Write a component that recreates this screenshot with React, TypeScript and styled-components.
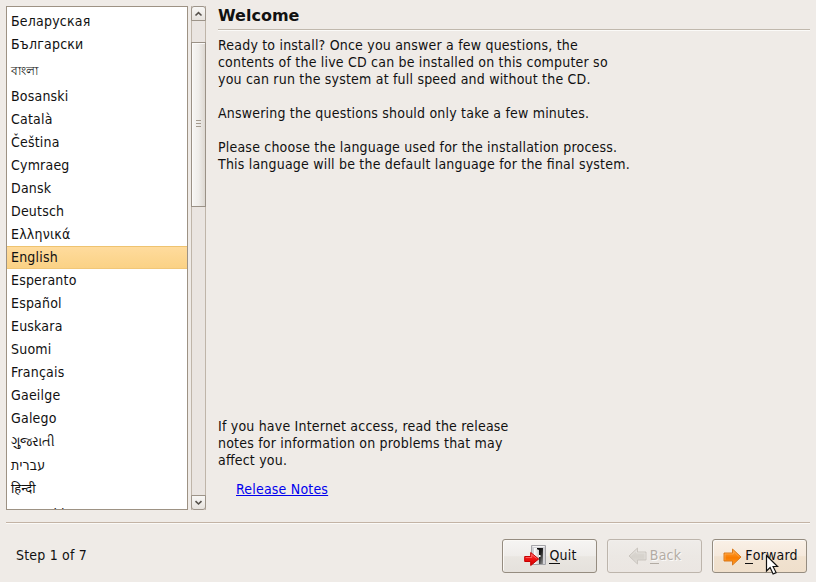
import React from "react";
import styled, { createGlobalStyle, css } from "styled-components";

const Global = createGlobalStyle`
  * { box-sizing: border-box; }
  html, body { margin: 0; padding: 0; overflow: hidden; }
  body {
    background: #efebe7;
    color: #111;
    font-family: "DejaVu Sans Condensed", "DejaVu Sans", "Noto Sans", sans-serif;
    font-size: 14px;
    letter-spacing: 0.2px;
    font-feature-settings: "liga" 1;
  }
`;

const Window = styled.main`
  width: 816px;
  height: 582px;
  display: flex;
  flex-direction: column;
  padding: 6px 6px 0;
  background: #efebe7;
  cursor: default;
`;

const Content = styled.div`
  display: flex;
  height: 504px;
`;

const LanguageList = styled.ul`
  width: 182px;
  height: 504px;
  margin: 0 3px 0 0;
  padding: 3px 0 0;
  list-style: none;
  overflow: hidden;
  background: #fff;
  border: 1px solid #9d9284;
`;

const Language = styled.li<{ $height?: number; $line?: number; $size?: number; $selected?: boolean }>`
  height: ${(p) => p.$height ?? 23}px;
  line-height: ${(p) => p.$line ?? p.$height ?? 23}px;
  padding: 0 4px;
  font-size: ${(p) => p.$size ?? 14}px;
  letter-spacing: ${(p) => (p.$size ? "0" : "0.2px")};
  white-space: nowrap;
  ${(p) =>
    p.$selected &&
    css`
      background: linear-gradient(#ffdc9e, #fad184);
      box-shadow: inset 0 1px #eec370, inset 0 -1px #f1c778;
    `}
`;

const Scrollbar = styled.div`
  width: 15px;
  height: 504px;
  display: flex;
  flex-direction: column;
  background: #eae5e1;
  border-left: 1px solid #bfb5a9;
  border-right: 1px solid #bfb5a9;
`;

const Stepper = styled.div<{ $down?: boolean }>`
  height: 15px;
  margin: 0 -1px;
  display: flex;
  align-items: center;
  justify-content: center;
  background: linear-gradient(#f8f7f5, #e6e2dd);
  border: 1px solid #9d9489;
  border-radius: ${(p) => (p.$down ? "0 0 3px 3px" : "3px 3px 0 0")};
`;

const Thumb = styled.div`
  height: 165px;
  margin: 21px -1px auto;
  padding-bottom: 2px;
  display: flex;
  align-items: center;
  justify-content: center;
  background: linear-gradient(90deg, #f7f6f4, #efedea 50%, #ddd8d2);
  border: 1px solid #9a9186;
  box-shadow: inset 1px 1px #fbfaf9;
`;

const Grip = styled.div`
  width: 5px;
  height: 7px;
  border-top: 1px solid #a49a8e;
  border-bottom: 1px solid #a49a8e;
  display: flex;
  align-items: center;
  &::before { content: ""; width: 5px; height: 1px; background: #a49a8e; }
`;

const Page = styled.section`
  flex: 1;
  display: flex;
  flex-direction: column;
  margin-left: 12px;
`;

const Title = styled.h1`
  margin: 0;
  height: 23px;
  font: bold 16px/19px "DejaVu Sans", sans-serif;
  letter-spacing: 0;
  color: #111;
`;

const Rule = styled.div<{ $footer?: boolean }>`
  height: 2px;
  flex: none;
  margin-top: ${(p) => (p.$footer ? 12 : 0)}px;
  background: ${(p) => (p.$footer ? "#c3b3a5" : "#c0b8ad")};
  border-bottom: 1px solid #fbfaf8;
`;

const Copy = styled.p`
  margin: 6px 0 0;
  line-height: 17px;
  white-space: pre;
`;

const Notes = styled.div`
  margin-top: auto;
  height: 92px;
  line-height: 17px;
  white-space: pre;
`;

const NotesLink = styled.a`
  display: block;
  margin: 12px 0 0 18px;
  color: #0000ee;
  text-decoration: underline;
`;

const Footer = styled.footer`
  display: flex;
  align-items: center;
  margin-top: 15px;
  height: 34px;
  padding: 0 3px 0 10px;
  gap: 10px;
`;

const Step = styled.span`
  flex: 1;
  line-height: 17px;
  margin-bottom: 2px;
`;

const Button = styled.button<{ $tone?: "warm" | "disabled" }>`
  position: relative;
  width: 95px;
  height: 34px;
  padding: 0 0 0 ${(p) => (p.$tone === "disabled" ? 0 : 2)}px;
  display: flex;
  align-items: center;
  justify-content: center;
  gap: 3px;
  font: inherit;
  letter-spacing: inherit;
  color: ${(p) => (p.$tone === "disabled" ? "#b3aca4" : "#111")};
  text-shadow: ${(p) => (p.$tone === "disabled" ? "1px 1px #fbfaf9" : "none")};
  border: 1px solid ${(p) => (p.$tone === "disabled" ? "#bdb5ac" : "#958c80")};
  border-radius: 3px;
  background: ${(p) =>
    p.$tone === "warm"
      ? "linear-gradient(#faf1e7, #f5e9dc 50%, #f1e2d0 52%, #efdfcb)"
      : p.$tone === "disabled"
        ? "linear-gradient(#efece9, #ece8e4 50%, #ebe6e2)"
        : "linear-gradient(#f6f5f3, #efedea 50%, #e9e6e1 52%, #e5e1dc)"};
  box-shadow: inset 1px 1px ${(p) => (p.$tone === "disabled" ? "#f1eeeb" : "#fbf9f6")};
  cursor: default;
`;

const Label = styled.span`
  line-height: 17px;
  margin-bottom: 2px;
`;

const Mnemonic = styled.span`
  display: inline-block;
  height: 17px;
  box-shadow: 0 -1px inset currentColor;
`;

const Pointer = styled.svg`
  position: absolute;
  left: 52px;
  top: 14px;
`;

const Icon = styled.svg`
  flex: none;
  display: block;
`;

function Chevron({ down }: { down?: boolean }) {
  return (
    <Icon width="9" height="6" viewBox="0 0 9 6">
      <path d={down ? "M1.5 1.2 4.5 4 7.5 1.2" : "M1.5 4.5 4.5 1.7 7.5 4.5"} fill="none" stroke="#55504a" strokeWidth="1.6" />
    </Icon>
  );
}

function QuitIcon() {
  return (
    <Icon width="22" height="22" viewBox="0 0 22 22">
      <defs>
        <linearGradient id="room" x2="1" y2="1"><stop offset="0" stopColor="#000" /><stop offset=".5" stopColor="#222" /><stop offset="1" stopColor="#999" /></linearGradient>
        <linearGradient id="door"><stop offset="0" stopColor="#fff" /><stop offset="1" stopColor="#d0d0d0" /></linearGradient>
        <linearGradient id="red" x2="0" y2="1"><stop offset="0" stopColor="#ff5050" /><stop offset=".5" stopColor="#ef1111" /><stop offset="1" stopColor="#d40000" /></linearGradient>
      </defs>
      <path d="M7.5.5h14v19h-14z" fill="#d2d2d6" stroke="#a4a4a8" />
      <path d="M8.5 1.500h12" stroke="#f5f5f5" />
      <path d="M10 3h9v16h-9z" fill="#f5f5f5" />
      <path d="M13 3h6v16h-6z" fill="url(#room)" />
      <path d="m10 3 5 2v14h-5z" fill="url(#door)" />
      <path d="M15 10h1.500v2H15z" fill="#fff" />
      <path d="M.7 11.500h6v-4l8 6.500-8 6.500v-4h-6z" fill="url(#red)" stroke="#c60000" strokeLinejoin="round" />
      <path d="M1.700 12.500h6v-3l5 4" fill="none" stroke="#ff7a7a" opacity=".7" />
    </Icon>
  );
}

function ArrowIcon({ back }: { back?: boolean }) {
  const fill = back ? "back-fill" : "forward-fill";
  return (
    <Icon width="19" height="20" viewBox="0 0 19 20">
      <defs>
        <linearGradient id={fill} x2="0" y2="1">
          <stop offset="0" stopColor={back ? "#dedad5" : "#ffa640"} />
          <stop offset=".55" stopColor={back ? "#d6d2cc" : "#f97c00"} />
          <stop offset="1" stopColor={back ? "#e0ddd8" : "#ff9a25"} />
        </linearGradient>
      </defs>
      <g transform={back ? "translate(19 -1) scale(-1 1)" : undefined}>
        <path d="M1 7h8.500V3l8.500 8-8.500 8v-4H1z" fill={`url(#${fill})`} stroke={back ? "#cbc6c0" : "#d97a1c"} strokeLinejoin="round" />
        <path d="M2 14V8h8.500V5.300l6 5.700" fill="none" stroke={back ? "#e7e4df" : "#ffab50"} opacity=".7" />
      </g>
    </Icon>
  );
}

type Entry = { name: string; height?: number; line?: number; size?: number; selected?: boolean };

const languages: Entry[] = [
  { name: "Беларуская" },
  { name: "Български" },
  { name: "বাংলা", height: 29, line: 30, size: 12 },
  { name: "Bosanski" },
  { name: "Català" },
  { name: "Čeština" },
  { name: "Cymraeg" },
  { name: "Dansk" },
  { name: "Deutsch" },
  { name: "Ελληνικά" },
  { name: "English", selected: true },
  { name: "Esperanto" },
  { name: "Español" },
  { name: "Euskara" },
  { name: "Suomi" },
  { name: "Français" },
  { name: "Gaeilge" },
  { name: "Galego" },
  { name: "ગુજરાતી", height: 24, line: 23, size: 12.5 },
  { name: "עברית" },
  { name: "हिन्दी", height: 26, line: 23, size: 13 },
  { name: "Hrvatski" },
];

export default function App() {
  return (
    <>
      <Global />
      <Window>
        <Content>
          <LanguageList>
            {languages.map((l) => (
              <Language key={l.name} $height={l.height} $line={l.line} $size={l.size} $selected={l.selected}>
                {l.name}
              </Language>
            ))}
          </LanguageList>
          <Scrollbar>
            <Stepper><Chevron /></Stepper>
            <Thumb><Grip /></Thumb>
            <Stepper $down><Chevron down /></Stepper>
          </Scrollbar>
          <Page>
            <Title>Welcome</Title>
            <Rule />
            <Copy>{`Ready to install? Once you answer a few questions, the
contents of the live CD can be installed on this computer so
you can run the system at full speed and without the CD.

Answering the questions should only take a few minutes.

Please choose the language used for the installation process.
This language will be the default language for the final system.`}</Copy>
            <Notes>
              {`If you have Internet access, read the release
notes for information on problems that may
affect you.`}
              <NotesLink>Release Notes</NotesLink>
            </Notes>
          </Page>
        </Content>
        <Rule $footer />
        <Footer>
          <Step>Step 1 of 7</Step>
          <Button><QuitIcon /><Label><Mnemonic>Q</Mnemonic>uit</Label></Button>
          <Button $tone="disabled"><ArrowIcon back /><Label><Mnemonic>B</Mnemonic>ack</Label></Button>
          <Button $tone="warm">
            <ArrowIcon /><Label><Mnemonic>F</Mnemonic>orward</Label>
            <Pointer width="14" height="22" viewBox="0 0 14 22">
              <path d="M1.500 1.500v15.500l3.600-3.500 3 6.500 3-1.400-3-6.100h4.500z" fill="#fff" stroke="#111" strokeWidth="1.2" />
            </Pointer>
          </Button>
        </Footer>
      </Window>
    </>
  );
}
